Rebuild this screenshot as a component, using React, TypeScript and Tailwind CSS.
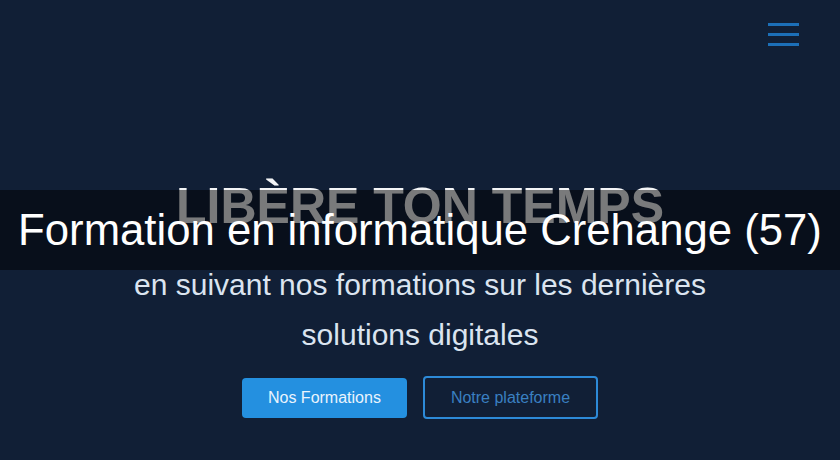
const Hamburger = () => (
  <button className="flex flex-col gap-[7px] w-[31px]" aria-label="Menu">
    <span className="block h-[3px] w-full bg-[#1c6fb8]" />
    <span className="block h-[3px] w-full bg-[#1c6fb8]" />
    <span className="block h-[3px] w-full bg-[#1c6fb8]" />
  </button>
);

export default function App() {
  return (
    <div
      className="relative h-[460px] w-full overflow-hidden bg-[#111f36]"
      style={{ fontFamily: '"Liberation Sans", Arial, sans-serif' }}
    >
      <header className="flex justify-end pt-[23px] pr-[41px]">
        <Hamburger />
      </header>

      <section className="flex flex-col items-center mt-[130px]">
        <h2 className="text-[50px] leading-[60px] font-bold text-gray-100">LIBÈRE TON TEMPS</h2>
        <p className="mt-[24px] max-w-[600px] text-center text-[30px] leading-[50px] text-[#dbe4f0]">
          en suivant nos formations sur les dernières solutions digitales
        </p>
        <div className="mt-[16px] flex items-center gap-4">
          <a className="rounded bg-[#2490e0] px-[26px] py-[11px] text-base leading-[18px] text-[#eaf4fd]">
            Nos Formations
          </a>
          <a className="rounded border-2 border-[#2d8ad8] px-[26px] py-[10.5px] text-base leading-[18px] text-[#3a80c2]">
            Notre plateforme
          </a>
        </div>
      </section>

      <div className="absolute left-0 right-0 top-[190px] flex h-[80px] items-center justify-center bg-black/50">
        <h1 className="text-[43.7px] text-white">Formation en informatique Crehange (57)</h1>
      </div>
    </div>
  );
}
